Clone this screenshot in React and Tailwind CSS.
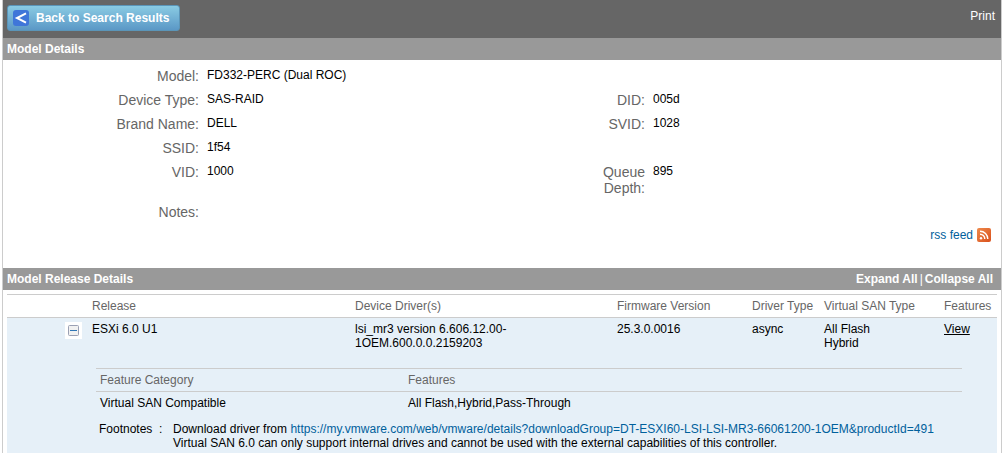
import { useState } from "react";

const details = [
  [["Model:", "FD332-PERC (Dual ROC)"]],
  [["Device Type:", "SAS-RAID"], ["DID:", "005d"]],
  [["Brand Name:", "DELL"], ["SVID:", "1028"]],
  [["SSID:", "1f54"]],
  [["VID:", "1000"], ["Queue Depth:", "895"]],
  [["Notes:", ""]],
];

const columns = [
  ["Release", "w-[263px]"],
  ["Device Driver(s)", "w-[262px]"],
  ["Firmware Version", "w-[135px]"],
  ["Driver Type", "w-[72px]"],
  ["Virtual SAN Type", "w-[120px]"],
  ["Features", "w-[53px]"],
];

const downloadUrl =
  "https://my.vmware.com/web/vmware/details?downloadGroup=DT-ESXI60-LSI-LSI-MR3-66061200-1OEM&productId=491";

function BackIcon() {
  return (
    <svg width="16" height="16" viewBox="0 0 16 16" aria-hidden="true">
      <rect width="16" height="16" rx="3" fill="#3f76d9" />
      <path d="M13 3.4 L4 8 L13 12.6" fill="none" stroke="#fff" strokeWidth="2" />
    </svg>
  );
}

function RssIcon() {
  return (
    <svg width="14" height="14" viewBox="0 0 14 14" aria-hidden="true">
      <defs>
        <linearGradient id="rss" x1="0" y1="0" x2="1" y2="1">
          <stop offset="0" stopColor="#ee8a4c" />
          <stop offset="1" stopColor="#d9501c" />
        </linearGradient>
      </defs>
      <rect width="14" height="14" rx="2" fill="url(#rss)" />
      <circle cx="4" cy="10.2" r="1.2" fill="#fff" />
      <path d="M3 6.2a4.8 4.8 0 0 1 4.8 4.8M3 3.2a7.8 7.8 0 0 1 7.8 7.8" fill="none" stroke="#fff" strokeWidth="1.4" />
    </svg>
  );
}

function ToggleIcon({ open }) {
  return (
    <svg width="17" height="17" viewBox="0 0 17 17" aria-hidden="true">
      <rect width="17" height="17" fill="#fff" />
      <rect x="3.5" y="3.5" width="10" height="10" rx="1" fill="#f1f1f1" stroke="#9aa0b4" />
      <path d="M5 8.5h7" stroke="#2f76b5" />
      {!open && <path d="M8.5 5v7" stroke="#2f76b5" />}
    </svg>
  );
}

function SectionBar({ title, children }) {
  return (
    <div className="flex h-[22px] items-center justify-between bg-[#999] pr-2 pl-1 font-bold text-white">
      <h2>{title}</h2>
      {children}
    </div>
  );
}

export default function App() {
  const [open, setOpen] = useState(true);
  return (
    <main className="mr-1.5 ml-0.5 border-x border-[#ccc] bg-white font-['Liberation_Sans',Arial,sans-serif] text-[12px] leading-[14px] text-black">
      <header className="flex h-[38px] items-start justify-between bg-[#666] pt-[5px] pr-1.5 pl-1">
        <button className="flex h-[26px] items-center gap-[7px] rounded-[3px] border border-[#5b95b8] bg-linear-to-b from-[#8acbe3] to-[#5b98c6] pr-2.5 pl-[5px] font-bold text-white">
          <BackIcon />
          Back to Search Results
        </button>
        <a href="#print" className="pt-1 text-white">Print</a>
      </header>

      <SectionBar title="Model Details" />
      <dl className="pt-1">
        {details.map((row) => (
          <div key={row[0][0]} className="grid grid-cols-[196px_382px_64px_1fr] py-1">
            {row.map(([label, value]) => (
              <div key={label} className="col-span-2 grid grid-cols-subgrid">
                <dt className="text-right text-[14px] leading-4 text-[#666]">{label}</dt>
                <dd className="pl-2">{value}</dd>
              </div>
            ))}
          </div>
        ))}
      </dl>
      <div className="flex h-11 items-start justify-end pt-1 pr-2.5">
        <a href="#rss" className="flex items-center gap-1 text-[#00609c]">
          rss feed
          <RssIcon />
        </a>
      </div>

      <SectionBar title="Model Release Details">
        <div className="flex gap-0.5">
          <button onClick={() => setOpen(true)}>Expand All</button>
          <span className="font-normal">|</span>
          <button onClick={() => setOpen(false)}>Collapse All</button>
        </div>
      </SectionBar>

      <div className="px-1 pt-1">
        <table className="w-full table-fixed border-collapse text-left align-top">
          <thead>
            <tr className="h-[23px] border-y border-[#ccc] text-[#666]">
              <td className="w-[85px]" />
              {columns.map(([name, width]) => (
                <th key={name} scope="col" className={`${width} font-normal whitespace-nowrap`}>{name}</th>
              ))}
            </tr>
          </thead>
          <tbody className="bg-[#e6f0f8]">
            <tr className="align-top">
              <td className="pt-1 pr-2.5">
                <button className="ml-auto block" aria-label="Toggle release" aria-expanded={open} onClick={() => setOpen(!open)}>
                  <ToggleIcon open={open} />
                </button>
              </td>
              <td className="pt-1">ESXi 6.0 U1</td>
              <td className="pt-1">lsi_mr3 version 6.606.12.00-<wbr />1OEM.600.0.0.2159203</td>
              <td className="pt-1">25.3.0.0016</td>
              <td className="pt-1">async</td>
              <td className="pt-1">All Flash<br />Hybrid</td>
              <td className="pt-1"><a href="#view" className="underline">View</a></td>
            </tr>
            {open && (
              <tr>
                <td colSpan={7} className="pt-[18px] pr-[35px] pb-1 pl-[89px]">
                  <table className="w-full table-fixed border-collapse">
                    <thead>
                      <tr className="h-[23px] border-y border-[#ccc] text-[#666]">
                        <th scope="col" className="w-[308px] pl-1 font-normal">Feature Category</th>
                        <th scope="col" className="pl-1 font-normal">Features</th>
                      </tr>
                    </thead>
                    <tbody>
                      <tr className="h-[22px]">
                        <td className="pl-1">Virtual SAN Compatible</td>
                        <td className="pl-1">All Flash,Hybrid,Pass-Through</td>
                      </tr>
                    </tbody>
                  </table>
                  <div className="flex pt-2 pl-[3px] whitespace-nowrap">
                    <span className="w-[60px]">Footnotes</span>
                    <span className="w-3.5">:</span>
                    <p>
                      Download driver from{" "}
                      <a href={downloadUrl} className="text-[#00609c]">{downloadUrl}</a>
                      <br />
                      Virtual SAN 6.0 can only support internal drives and cannot be used with the external capabilities of this controller.
                    </p>
                  </div>
                </td>
              </tr>
            )}
          </tbody>
        </table>
      </div>
    </main>
  );
}
